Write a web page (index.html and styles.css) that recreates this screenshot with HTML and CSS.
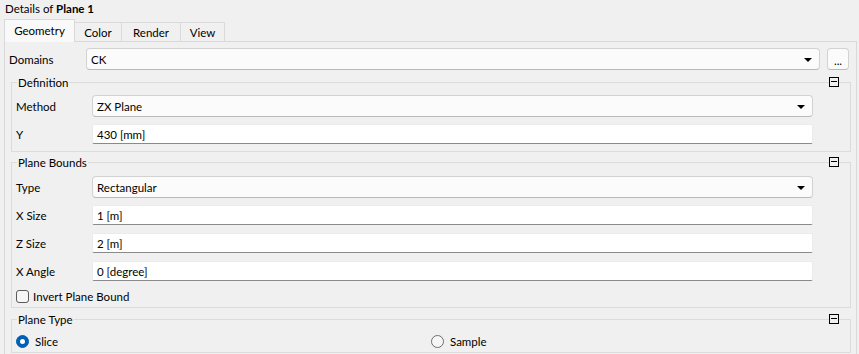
FILE: index.html
```html
<!DOCTYPE html>
<html lang="en">
<head>
    <meta charset="UTF-8">
    <title>Details of Plane 1</title>
    <link rel="stylesheet" href="styles.css">
</head>
<body>
    <div class="title">Details of <b>Plane 1</b></div>

    <div class="tabs">
        <div class="tab active tab-geometry">Geometry</div>
        <div class="tab tab-color">Color</div>
        <div class="tab tab-render">Render</div>
        <div class="tab tab-view">View</div>
    </div>

    <div class="panel">
        <div class="row domains">
            <span class="label">Domains</span>
            <div class="combo">CK<span class="arrow"></span></div>
            <div class="more">...</div>
        </div>

        <div class="group definition">
            <span class="group-title">Definition</span>
            <span class="collapse"></span>
            <div class="row">
                <span class="label">Method</span>
                <div class="combo">ZX Plane<span class="arrow"></span></div>
            </div>
            <div class="row">
                <span class="label">Y</span>
                <div class="field">430 [mm]</div>
            </div>
        </div>

        <div class="group bounds">
            <span class="group-title">Plane Bounds</span>
            <span class="collapse"></span>
            <div class="row">
                <span class="label">Type</span>
                <div class="combo">Rectangular<span class="arrow"></span></div>
            </div>
            <div class="row">
                <span class="label">X Size</span>
                <div class="field">1 [m]</div>
            </div>
            <div class="row">
                <span class="label">Z Size</span>
                <div class="field">2 [m]</div>
            </div>
            <div class="row">
                <span class="label">X Angle</span>
                <div class="field">0 [degree]</div>
            </div>
            <div class="row check-row">
                <span class="checkbox"></span>
                <span>Invert Plane Bound</span>
            </div>
        </div>

        <div class="group plane-type">
            <span class="group-title">Plane Type</span>
            <span class="collapse"></span>
            <div class="radios">
                <div class="radio-item"><span class="radio checked"></span>Slice</div>
                <div class="radio-item"><span class="radio"></span>Sample</div>
            </div>
        </div>
    </div>
</body>
</html>
```

FILE: styles.css
```css
/* Properties panel, light desktop look */
body {
    margin: 0;
    background: #f0f0f0;
    font-family: Lato, "Noto Sans", sans-serif;
    font-size: 11.5px;
    color: #000;
    overflow: hidden;
}

.title {
    height: 20px;
    line-height: 18px;
    padding-left: 5px;
}

.tabs {
    display: flex;
    align-items: flex-end;
    height: 21px;
    padding-left: 4px;
}

.tab {
    height: 18px;
    line-height: 19px;
    text-align: center;
    border: 1px solid #dadada;
    border-bottom: none;
    border-left: none;
}

.tab.active {
    height: 22px;
    line-height: 21px;
    margin-bottom: -1px;
    background: #f9f9f9;
    border-left: 1px solid #dadada;
    position: relative;
    z-index: 1;
}

.tab-geometry { width: 69px; }
.tab-color { width: 46px; }
.tab-render { width: 58px; }
.tab-view { width: 43px; }

.panel {
    margin: 0 2px 0 4px;
    border: 1px solid #d9d9d9;
    padding-top: 6px;
    height: 320px;
}

.row {
    display: flex;
    align-items: center;
    height: 22px;
}

.label {
    width: 76px;
    flex-shrink: 0;
}

.domains {
    padding: 0 7px 0 4px;
}

.domains .label {
    width: 77px;
}

.combo {
    flex: 1;
    height: 20px;
    line-height: 21px;
    padding-left: 4px;
    background: #fbfbfb;
    border: 1px solid #d2d2d2;
    border-bottom-color: #b9b9b9;
    border-radius: 4px;
    position: relative;
}

.arrow {
    position: absolute;
    right: 7px;
    top: 9px;
    border-left: 4px solid transparent;
    border-right: 4px solid transparent;
    border-top: 4px solid #000;
}

.more {
    width: 20px;
    height: 20px;
    margin-left: 7px;
    line-height: 24px;
    text-align: center;
    background: #fbfbfb;
    border: 1px solid #d2d2d2;
    border-bottom-color: #b9b9b9;
    border-radius: 4px;
}

.field {
    flex: 1;
    height: 18px;
    line-height: 19px;
    padding-left: 4px;
    background: #fff;
    border: 1px solid #ebebeb;
    border-bottom-color: #8a8a8a;
    border-radius: 2px;
}

.group {
    position: relative;
    margin: 12px 5px 0 6px;
    border: 1px solid #dcdcdc;
    padding: 12px 37px 6px 4px;
    display: flex;
    flex-direction: column;
    gap: 6px;
}

.group.bounds {
    margin-top: 10px;
    padding-top: 13px;
    padding-bottom: 3px;
}

.group.plane-type {
    margin-top: 11px;
    padding: 12px 0 2px 0;
}

.group-title {
    position: absolute;
    top: -9px;
    left: 5px;
    padding: 0 1px;
    line-height: 17px;
    background: #f0f0f0;
}

.collapse {
    position: absolute;
    top: -6px;
    right: 11px;
    width: 8px;
    height: 8px;
    border: 1px solid #000;
    background: #f0f0f0;
}

.collapse::after {
    content: "";
    position: absolute;
    left: 1px;
    right: 1px;
    top: 3px;
    height: 1px;
    background: #000;
}

.check-row {
    height: 16px;
    gap: 4px;
}

.checkbox {
    width: 11px;
    height: 11px;
    border: 1px solid #5a5a5a;
    border-radius: 3px;
    background: #f6f6f6;
}

.radios {
    display: grid;
    grid-template-columns: 415px 1fr;
    height: 18px;
}

.radio-item {
    display: flex;
    align-items: center;
    gap: 6px;
    padding-left: 4px;
}

.radio {
    width: 11px;
    height: 11px;
    border: 1px solid #6e6e6e;
    border-radius: 50%;
    background: #f6f6f6;
    position: relative;
}

.radio.checked {
    background: #005fb8;
    border-color: #005fb8;
}

.radio.checked::after {
    content: "";
    position: absolute;
    left: 3px;
    top: 3px;
    width: 5px;
    height: 5px;
    border-radius: 50%;
    background: #fff;
}
```
